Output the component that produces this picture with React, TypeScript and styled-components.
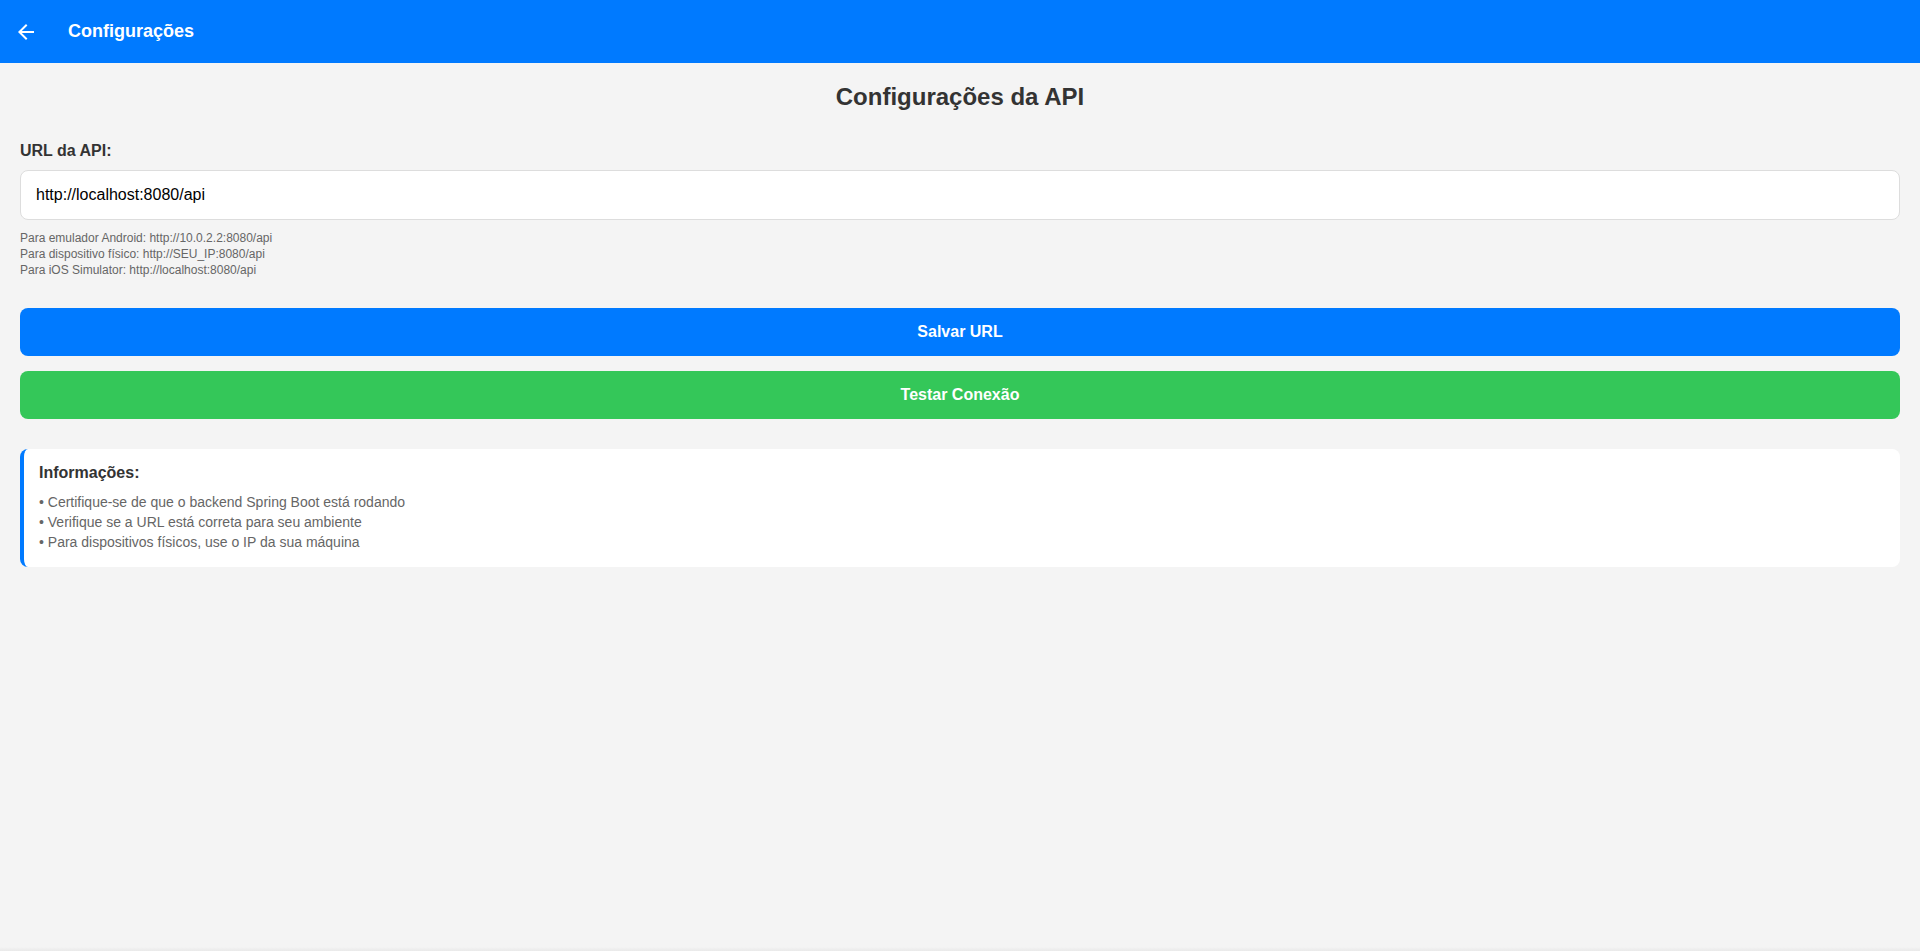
import React from "react";
import styled, { createGlobalStyle } from "styled-components";

const GlobalStyle = createGlobalStyle`
  html, body {
    margin: 0;
    padding: 0;
    background: #f4f4f4;
    font-family: "Liberation Sans", Arial, sans-serif;
  }
  * { box-sizing: border-box; }
`;

const Screen = styled.div`
  display: flex;
  flex-direction: column;
  height: 951px;
  background: #f4f4f4;
`;

const Header = styled.header`
  display: flex;
  align-items: center;
  height: 63px;
  background: #007aff;
  padding-left: 14px;
  gap: 30px;
  flex-shrink: 0;
`;

const BackButton = styled.button`
  display: flex;
  align-items: center;
  justify-content: center;
  width: 24px;
  height: 24px;
  padding: 0;
  border: none;
  background: transparent;
  color: #fff;
  cursor: pointer;
`;

const HeaderTitle = styled.h1`
  margin: 0;
  color: #fff;
  font-size: 18px;
  font-weight: 700;
`;

const Content = styled.main`
  flex: 1;
  padding: 20px;
  display: flex;
  flex-direction: column;
`;

const PageTitle = styled.h2`
  margin: 0 0 30px;
  text-align: center;
  font-size: 24px;
  line-height: 28px;
  font-weight: 700;
  color: #333;
`;

const Section = styled.section`
  display: flex;
  flex-direction: column;
  margin-bottom: 30px;
`;

const Label = styled.label`
  font-size: 16px;
  line-height: 19px;
  font-weight: 700;
  color: #333;
  margin-bottom: 10px;
`;

const Input = styled.input`
  height: 50px;
  border: 1px solid #ddd;
  border-radius: 8px;
  background: #fff;
  padding: 0 15px;
  font-family: "Liberation Sans", Arial, sans-serif;
  font-size: 16px;
  color: #000;
  outline: none;
`;

const HelpText = styled.p`
  margin: 10px 0 0;
  font-size: 12px;
  line-height: 16px;
  color: #666;
`;

const ActionButton = styled.button<{ $color: string }>`
  height: 48px;
  width: 100%;
  border: none;
  border-radius: 8px;
  background: ${(p) => p.$color};
  color: #fff;
  font-family: "Liberation Sans", Arial, sans-serif;
  font-size: 16px;
  font-weight: 700;
  margin-bottom: 15px;
  cursor: pointer;
`;

const InfoBox = styled.div`
  margin-top: 15px;
  background: #fff;
  border-radius: 8px;
  border-left: 4px solid #007aff;
  padding: 15px;
`;

const InfoTitle = styled.h3`
  margin: 0 0 10px;
  font-size: 16px;
  line-height: 18px;
  font-weight: 700;
  color: #333;
`;

const InfoLine = styled.p`
  margin: 0;
  font-size: 14px;
  line-height: 20px;
  color: #666;
`;

const BottomShade = styled.div`
  height: 4px;
  flex-shrink: 0;
  background: linear-gradient(to bottom, #f4f4f4, #e9e9e9);
`;

export default function App() {
  return (
    <>
      <GlobalStyle />
      <Screen>
        <Header>
          <BackButton aria-label="Voltar">
            <svg width="24" height="24" viewBox="0 0 24 24" fill="#fff">
              <path d="M20 11H7.83l5.59-5.59L12 4l-8 8 8 8 1.41-1.41L7.83 13H20v-2z" />
            </svg>
          </BackButton>
          <HeaderTitle>Configurações</HeaderTitle>
        </Header>
        <Content>
          <PageTitle>Configurações da API</PageTitle>
          <Section>
            <Label>URL da API:</Label>
            <Input defaultValue="http://localhost:8080/api" />
            <HelpText>
              Para emulador Android: http://10.0.2.2:8080/api
              <br />
              Para dispositivo físico: http://SEU_IP:8080/api
              <br />
              Para iOS Simulator: http://localhost:8080/api
            </HelpText>
          </Section>
          <ActionButton $color="#007aff">Salvar URL</ActionButton>
          <ActionButton $color="#34c759">Testar Conexão</ActionButton>
          <InfoBox>
            <InfoTitle>Informações:</InfoTitle>
            <InfoLine>• Certifique-se de que o backend Spring Boot está rodando</InfoLine>
            <InfoLine>• Verifique se a URL está correta para seu ambiente</InfoLine>
            <InfoLine>• Para dispositivos físicos, use o IP da sua máquina</InfoLine>
          </InfoBox>
        </Content>
        <BottomShade />
      </Screen>
    </>
  );
}
